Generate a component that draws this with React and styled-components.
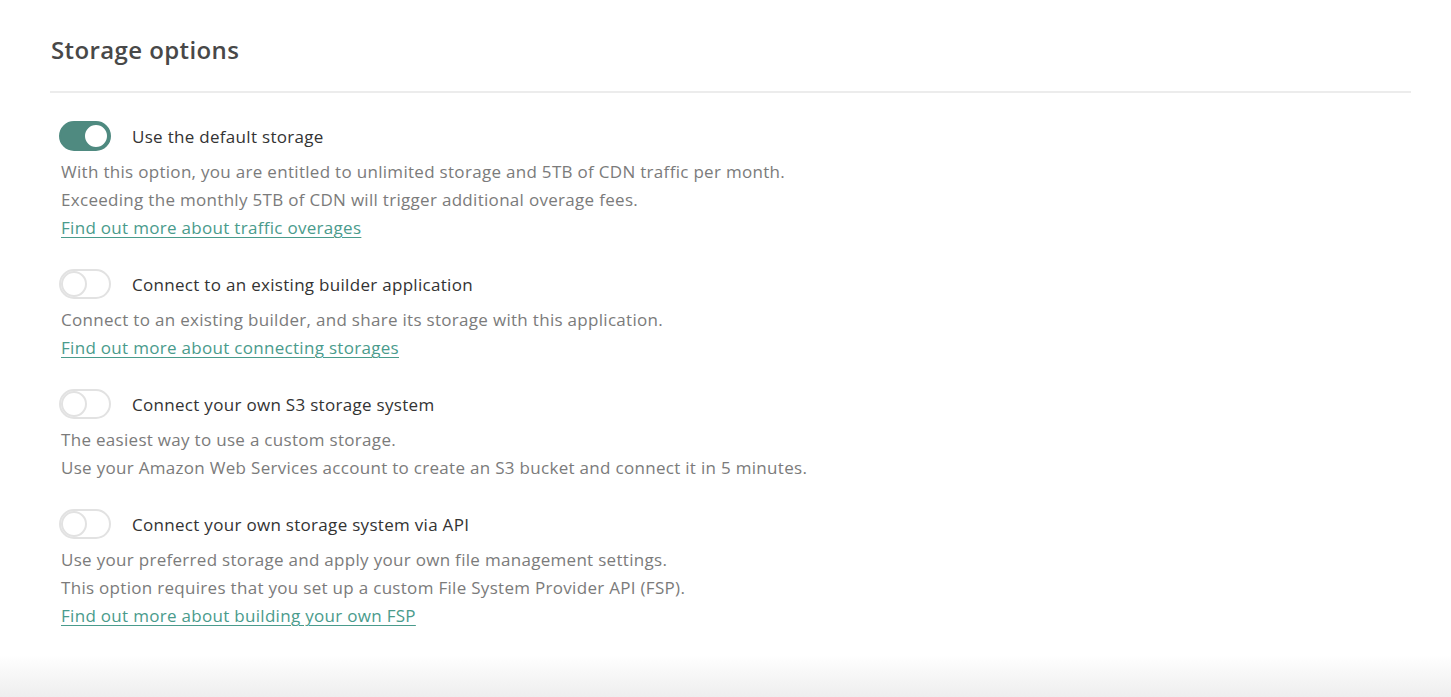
import styled, { createGlobalStyle } from 'styled-components';
import { useState } from 'react';

const GlobalStyle = createGlobalStyle`
    html, body {
        margin: 0;
        padding: 0;
        background: #ffffff;
    }
    body {
        font-family: 'Open Sans', 'Noto Sans', sans-serif;
        -webkit-font-smoothing: antialiased;
    }
`;

const options = [
    {
        id: 'default',
        title: 'Use the default storage',
        lines: [
            'With this option, you are entitled to unlimited storage and 5TB of CDN traffic per month.',
            'Exceeding the monthly 5TB of CDN will trigger additional overage fees.',
        ],
        link: 'Find out more about traffic overages',
    },
    {
        id: 'builder',
        title: 'Connect to an existing builder application',
        lines: ['Connect to an existing builder, and share its storage with this application.'],
        link: 'Find out more about connecting storages',
    },
    {
        id: 's3',
        title: 'Connect your own S3 storage system',
        lines: [
            'The easiest way to use a custom storage.',
            'Use your Amazon Web Services account to create an S3 bucket and connect it in 5 minutes.',
        ],
    },
    {
        id: 'api',
        title: 'Connect your own storage system via API',
        lines: [
            'Use your preferred storage and apply your own file management settings.',
            'This option requires that you set up a custom File System Provider API (FSP).',
        ],
        link: 'Find out more about building your own FSP',
    },
];

export default function App() {
    const [selected, setSelected] = useState('default');

    return (
        <>
            <GlobalStyle/>
            <Page>
                <Main>
                    <Title>Storage options</Title>
                    <Divider/>
                    <List>
                        {options.map(option => (
                            <Option key={option.id}>
                                <OptionHead>
                                    <Toggle
                                        $on={selected === option.id}
                                        onClick={() => setSelected(option.id)}
                                        aria-pressed={selected === option.id}
                                    >
                                        <Knob $on={selected === option.id}/>
                                    </Toggle>
                                    <Label>{option.title}</Label>
                                </OptionHead>
                                <Description>
                                    {option.lines.map(line => <p key={line}>{line}</p>)}
                                    {option.link && <a href="#">{option.link}</a>}
                                </Description>
                            </Option>
                        ))}
                    </List>
                </Main>
                <Footer/>
            </Page>
        </>
    );
}

// styled components
const Page = styled.div`
    display: flex;
    flex-direction: column;
    height: 100vh;
    overflow: hidden;
`;

const Main = styled.main`
    flex: 1;
    box-sizing: border-box;
    padding: 30px 40px 0 51px;
`;

const Title = styled.h1`
    margin: 0;
    font-size: 24px;
    line-height: 40px;
    font-weight: 600;
    letter-spacing: 0.4px;
    color: #484848;
`;

const Divider = styled.hr`
    margin: 21px 0 0 -1px;
    border: none;
    height: 2px;
    background-color: #ececec;
`;

const List = styled.div`
    display: flex;
    flex-direction: column;
    gap: 26px;
    padding: 27px 0 0 8px;
`;

const Option = styled.section`
    display: flex;
    flex-direction: column;
`;

const OptionHead = styled.div`
    display: flex;
    align-items: center;
    gap: 21px;
    height: 32px;
`;

const Toggle = styled.button`
    position: relative;
    box-sizing: border-box;
    width: 52px;
    height: 30px;
    padding: 0;
    border-radius: 15px;
    border: 2px solid ${p => (p.$on ? '#4f8a80' : '#e2e2e2')};
    background-color: ${p => (p.$on ? '#4f8a80' : '#ffffff')};
    cursor: pointer;
`;

const Knob = styled.span`
    position: absolute;
    top: 0;
    left: ${p => (p.$on ? '22px' : '0')};
    box-sizing: border-box;
    width: 26px;
    height: 26px;
    border-radius: 50%;
    background-color: #ffffff;
    border: 2px solid ${p => (p.$on ? '#4f8a80' : '#e2e2e2')};
`;

const Label = styled.span`
    font-size: 17px;
    letter-spacing: 0.3px;
    color: #333333;
`;

const Description = styled.div`
    padding: 6px 0 0 2px;
    font-size: 17px;
    letter-spacing: 0.3px;
    line-height: 28px;
    color: #7b7b7b;
    p{
        margin: 0;
    }
    a{
        color: #4a9b8c;
        text-decoration: underline;
        text-underline-offset: 3px;
        text-decoration-thickness: 1px;
    }
`;

const Footer = styled.footer`
    height: 42px;
    flex-shrink: 0;
    background: linear-gradient(to bottom, #ffffff, #eeeeee);
`;
